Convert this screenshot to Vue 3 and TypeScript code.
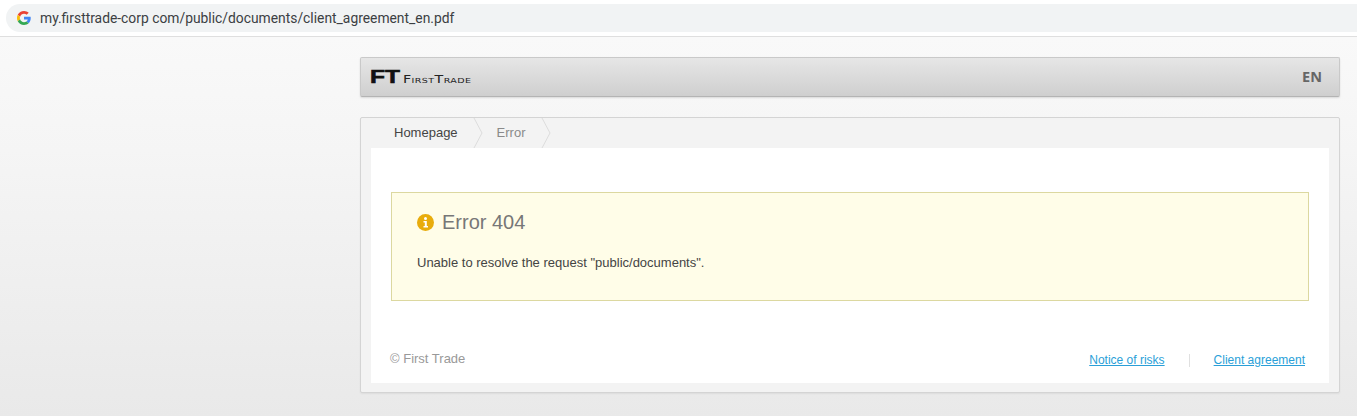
<script setup lang="ts">
const links: string[] = ['Notice of risks', 'Client agreement']
</script>

<template>
  <div class="page">
    <div class="browser">
      <div class="pill">
        <svg class="g" width="14" height="14" viewBox="0 0 48 48">
          <path fill="#EA4335" d="M24 9.5c3.5 0 6.7 1.2 9.2 3.6l6.9-6.9C35.9 2.4 30.5 0 24 0 14.6 0 6.5 5.4 2.6 13.2l8 6.2C12.5 13.7 17.8 9.5 24 9.5z"/>
          <path fill="#4285F4" d="M47 24.5c0-1.6-.1-3.100-.4-4.500H24v9h12.900c-.6 3-2.200 5.500-4.700 7.200l7.700 6C44.400 37.600 47 31.600 47 24.500z"/>
          <path fill="#FBBC05" d="M10.500 28.600c-.5-1.400-.8-3-.8-4.600s.3-3.200.8-4.600l-8-6.200C.9 16.400 0 20.100 0 24s.9 7.600 2.600 10.800l7.900-6.200z"/>
          <path fill="#34A853" d="M24 48c6.500 0 11.900-2.100 15.900-5.800l-7.700-6c-2.200 1.500-4.900 2.300-8.200 2.300-6.200 0-11.500-4.200-13.400-9.900l-8 6.200C6.500 42.600 14.600 48 24 48z"/>
        </svg>
        <span class="url">my.firsttrade-corp com/public/documents/client_agreement_en.pdf</span>
      </div>
    </div>

    <main class="column">
      <header class="head">
        <div class="logo">
          <span class="ft">FT</span>
          <span class="name">FirstTrade</span>
        </div>
        <span class="lang">EN</span>
      </header>

      <section class="card">
        <nav class="crumbs">
          <span class="crumb first">Homepage</span>
          <svg class="chev" width="10" height="30" viewBox="0 0 10 30"><path d="M1 0l8 15-8 15" fill="none" stroke="#dcdcdc"/></svg>
          <span class="crumb">Error</span>
          <svg class="chev" width="10" height="30" viewBox="0 0 10 30"><path d="M1 0l8 15-8 15" fill="none" stroke="#dcdcdc"/></svg>
        </nav>

        <div class="body">
          <div class="alert">
            <h1 class="title">
              <svg class="info" width="17" height="17" viewBox="0 0 17 17">
                <circle cx="8.500" cy="8.500" r="8.500" fill="#e8ac0c"/>
                <circle cx="8.500" cy="4.600" r="1.500" fill="#fff"/>
                <path d="M6.500 7h3.300v5H11v1.500H6.500V12h1.300V8.500H6.500z" fill="#fff"/>
              </svg>
              Error 404
            </h1>
            <p class="msg">Unable to resolve the request "public/documents".</p>
          </div>

          <footer class="foot">
            <span class="copy">© First Trade</span>
            <div class="links">
              <a class="link" href="#">{{ links[0] }}</a>
              <span class="sep"></span>
              <a class="link" href="#">{{ links[1] }}</a>
            </div>
          </footer>
        </div>
      </section>
    </main>
  </div>
</template>

<style>
html, body { margin: 0; padding: 0; }
</style>

<style scoped>
.page {
  width: 1357px;
  height: 416px;
  overflow: hidden;
  font-family: "Liberation Sans", Arial, sans-serif;
  background: linear-gradient(180deg, #f9f9f9 37px, #f5f5f5 150px, #e9e9e9 416px);
}
.browser {
  height: 36px;
  box-sizing: content-box;
  background: #fff;
  border-bottom: 1px solid #dfdfdf;
  padding-left: 6px;
  display: flex;
  align-items: flex-start;
}
.pill {
  margin-top: 4px;
  flex: 1;
  height: 28px;
  border-radius: 14px 0 0 14px;
  background: #f1f3f4;
  display: flex;
  align-items: center;
  padding-left: 11px;
}
.g { flex: none; margin-top: -1px; }
.url {
  margin-left: 9px;
  margin-top: 0;
  font-family: "Roboto", sans-serif;
  font-size: 13.850px;
  color: #3c4043;
  white-space: nowrap;
}
.column {
  width: 980px;
  margin: 20px 0 0 360px;
}
.head {
  height: 40px;
  box-sizing: border-box;
  border: 1px solid #c9c9c9;
  border-bottom-color: #b4b4b4;
  border-radius: 2px;
  background: linear-gradient(180deg, #e6e6e6 0%, #cfcfcf 100%);
  box-shadow: 0 1px 2px rgba(0,0,0,.12);
  display: flex;
  align-items: center;
  justify-content: space-between;
  padding: 0 17px 0 9px;
}
.logo {
  display: flex;
  align-items: flex-end;
  height: 14px;
  margin-top: -1px;
  color: #111;
}
.ft {
  font: 900 18px/14px "Liberation Sans", sans-serif;
  -webkit-text-stroke: .6px #111;
  width: 23px;
  transform: scaleX(1.360);
  transform-origin: left center;
  margin-right: 10px;
}
.name {
  font: 400 10.500px/9px "DejaVu Sans", sans-serif;
  font-variant: small-caps;
  letter-spacing: .3px;
  color: #222;
  width: 50px;
  white-space: nowrap;
  transform: scaleX(1.360);
  transform-origin: left center;
}
.lang {
  font-family: "Open Sans", sans-serif;
  font-size: 14.500px;
  font-weight: 700;
  color: #666;
  margin-top: -2px;
}
.card {
  margin-top: 20px;
  height: 276px;
  box-sizing: border-box;
  border: 1px solid #d4d4d4;
  border-radius: 2px;
  background: #f3f3f3;
  box-shadow: 0 1px 2px rgba(0,0,0,.06);
  padding: 0 10px 9px 10px;
}
.crumbs {
  height: 30px;
  display: flex;
  align-items: center;
  font-size: 13px;
}
.crumb { color: #8a8a8a; padding: 0 15px 0 14px; margin-top: -1px; }
.crumb.first { color: #444; padding: 0 15px 0 23px; }
.chev { flex: none; }
.body {
  background: #fff;
  height: 235px;
  padding: 44px 20px 0;
  box-sizing: border-box;
}
.alert {
  height: 109px;
  box-sizing: border-box;
  border: 1px solid #dcd8a0;
  background: #fffde8;
  padding: 16px 25px;
}
.title {
  margin: 0;
  display: flex;
  align-items: center;
  gap: 8px;
  font-size: 20px;
  font-weight: 400;
  line-height: 27px;
  color: #777;
}
.info { flex: none; }
.msg {
  margin: 19px 0 0;
  font-size: 13px;
  line-height: 16px;
  color: #444;
}
.foot {
  display: flex;
  justify-content: space-between;
  align-items: center;
  margin-top: 52px;
  font-size: 12px;
}
.copy { color: #999; font-size: 13px; margin-top: -3px; margin-left: -1px; }
.links {
  display: flex;
  align-items: center;
  padding-right: 4px;
}
.link { color: #2a9fd8; text-decoration: underline; }
.sep {
  width: 1px;
  height: 13px;
  background: #e0e0e0;
  margin: 0 24px;
}
</style>
